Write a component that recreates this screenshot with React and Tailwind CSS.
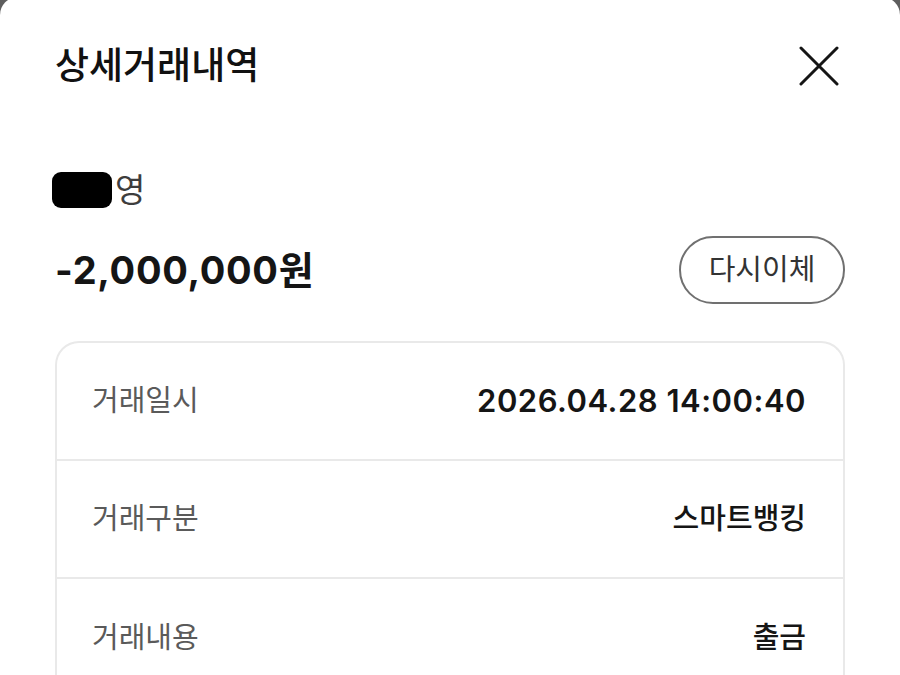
import React from "react";

const font = { fontFamily: 'Inter, "Noto Sans CJK KR", sans-serif' };

function Row({ label, value, numeric, last }) {
  return (
    <div
      className={`flex h-[118px] items-center justify-between pl-[35px] pr-[37px] ${
        last ? "" : "border-b-2 border-[#e9e9e9]"
      }`}
    >
      <span className="text-[29px] text-[#5a5a5a] font-normal">{label}</span>
      <span
        className={
          numeric
            ? "text-[31px] font-semibold text-[#151515] tracking-[0.5px]"
            : "text-[29px] font-medium text-[#151515]"
        }
      >
        {value}
      </span>
    </div>
  );
}

export default function App() {
  return (
    <div className="w-[900px] h-[675px] overflow-hidden bg-[#5e5e5e]" style={font}>
      <div className="-mt-[3px] h-[678px] rounded-t-[18px] bg-white px-[55px]">
        <div className="flex h-[138px] items-center justify-between">
          <h1 className="text-[37px] font-medium text-[#111]">상세거래내역</h1>
          <svg width="40" height="40" viewBox="0 0 40 40" className="mr-[6px]">
            <path d="M2 2 L38 38 M38 2 L2 38" stroke="#151515" strokeWidth="3" strokeLinecap="round" fill="none" />
          </svg>
        </div>

        <div className="mt-[35px] flex h-[40px] items-center">
          <span className="-ml-[3px] inline-block h-[36px] w-[60px] rounded-[9px] bg-black"></span>
          <span className="ml-[3px] text-[33px] text-[#3d3d3d] leading-[40px]">영</span>
        </div>

        <div className="mt-[26px] flex h-[68px] items-center justify-between">
          <span className="text-[38px] font-bold text-[#151515] tracking-[0.7px]">-2,000,000원</span>
          <button className="flex h-[68px] w-[166px] items-center justify-center rounded-full border-2 border-[#707070] text-[29px] text-[#333]">
            다시이체
          </button>
        </div>

        <div className="mt-[37px] rounded-t-[24px] border-2 border-b-0 border-[#e9e9e9]">
          <Row label="거래일시" value="2026.04.28 14:00:40" numeric />
          <Row label="거래구분" value="스마트뱅킹" />
          <Row label="거래내용" value="출금" last />
        </div>
      </div>
    </div>
  );
}
